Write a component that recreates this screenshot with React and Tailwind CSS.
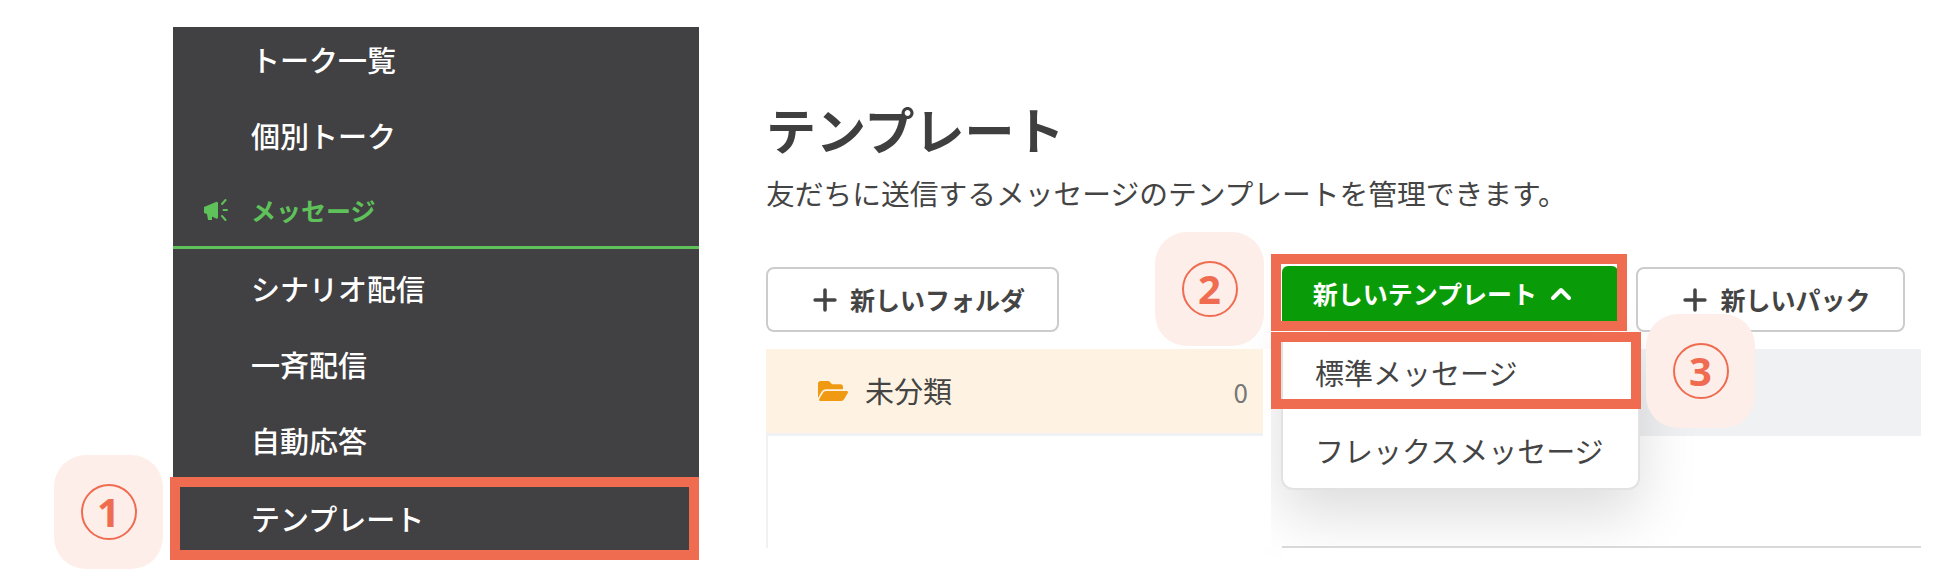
import { ChevronUp, Plus } from "lucide-react";
import { FaFolderOpen } from "react-icons/fa";

const jp = "font-['Noto_Sans_CJK_JP','Noto_Sans',sans-serif]";

function Step({ n, className }) {
  return (
    <div className={`absolute z-20 w-[109px] h-[114px] rounded-[32px] bg-[#fdeeea] flex items-center justify-center ${className}`}>
      <div className="w-[56px] h-[56px] rounded-full border-2 border-[#ef6c50] flex items-center justify-center text-[#ef6c50] text-[40px] font-bold font-['Open_Sans',sans-serif]">
        {n}
      </div>
    </div>
  );
}

function Megaphone() {
  return (
    <svg width="28" height="24" viewBox="0 0 28 24" fill="#5fc15a" className="shrink-0">
      <path d="M1 8 L13 3 Q15 2 15 4.5 L15 18 Q15 20.5 13 19.5 L9 17.5 L9 21 L5 21 L4 15 L1 14 Z" />
      <path d="M19 5 L22.5 1 M20.5 11 L24 11 M19 17 L22.5 21" stroke="#5fc15a" strokeWidth="2" strokeLinecap="round" fill="none" />
    </svg>
  );
}

function NavRow({ label, h }) {
  return (
    <div className={`flex items-center shrink-0 pl-[78px] text-white text-[29px] font-medium ${h}`}>{label}</div>
  );
}

function OutlineButton({ label, w }) {
  return (
    <button className={`relative h-[65px] ${w} pl-[8px] rounded-lg border-2 border-[#cccccc] bg-white flex items-center justify-center gap-2 text-[#444444] text-[25px] font-bold`}>
      <Plus size={34} strokeWidth={2.5} />
      {label}
    </button>
  );
}

export default function App() {
  return (
    <div className={`relative w-[1938px] h-[582px] overflow-hidden bg-white flex pt-[27px] pl-[173px] ${jp}`}>
      <aside className="relative w-[526px] h-[525px] bg-[#414042] flex flex-col shrink-0">
        <NavRow label="トーク一覧" h="h-[66px]" />
        <NavRow label="個別トーク" h="h-[82px] pt-[4px]" />
        <div className="flex items-center shrink-0 h-[74px] border-b-[3px] border-[#5fc15a] pl-[30px] gap-[20px] text-[#5fc15a] text-[25px] font-bold">
          <Megaphone />
          メッセージ
        </div>
        <NavRow label="シナリオ配信" h="h-[79px]" />
        <NavRow label="一斉配信" h="h-[72px] pt-[2px]" />
        <NavRow label="自動応答" h="h-[82px]" />
        <NavRow label="テンプレート" h="h-[70px] pt-[3px]" />
        <div className="absolute left-[-3px] right-0 bottom-[-8px] h-[83px] border-[10px] border-[#ef6c50]" />
        <Step n="1" className="left-[-119px] bottom-[-17px]" />
      </aside>

      <main className="relative ml-[67px] w-[1159px] shrink-0">
        <h1 className="mt-[70px] text-[50px] leading-[62px] font-bold text-[#3f3f3f]">テンプレート</h1>
        <p className="mt-[14px] text-[28.75px] leading-[40px] text-[#444444]">友だちに送信するメッセージのテンプレートを管理できます。</p>

        <div className="relative z-20 mt-[54px] flex items-start">
          <OutlineButton label="新しいフォルダ" w="w-[293px]" />
          <button className="relative ml-[223px] mt-[-1px] h-[56px] w-[336px] pr-[10px] rounded-t-md bg-[#0a9b08] flex items-center justify-center gap-[8px] text-white text-[25px] font-bold">
            新しいテンプレート
            <ChevronUp size={32} strokeWidth={3} />
          </button>
          <div className="ml-[18px]">
            <OutlineButton label="新しいパック" w="w-[269px]" />
          </div>
          <div className="absolute left-[505px] top-[-13px] w-[356px] h-[77px] border-[10px] border-[#ef6c50]" />
          <Step n="2" className="left-[389px] top-[-35px]" />
        </div>

        <div className="mt-[17px] flex h-[87px]">
          <div className="relative z-10 w-[505px] h-[200px] bg-white shrink-0">
            <div className="w-[497px] h-[87px] border-b-[3px] border-[#f0f1f3] bg-[#fef3e2] flex items-center pl-[52px] text-[#444444]">
              <FaFolderOpen size={30} color="#ef9a12" />
              <span className="ml-[17px] text-[29px]">未分類</span>
              <span className="ml-auto mr-[15px] text-[26px] text-[#777777]">0</span>
            </div>
            <div className="h-[112px] w-[2px] bg-[#f0f1f3]" />
          </div>
          <div className="ml-[11px] flex-1 mr-[4px] h-full bg-[#f0f1f3]" />
        </div>

        <div className="absolute left-[515px] top-[305px] w-[359px] h-[158px] bg-white rounded-b-xl border-2 border-t-0 border-[#e2e2e2] shadow-[0_24px_60px_rgba(0,0,0,0.14)] flex flex-col text-[29px] text-[#444444]">
          <div className="h-[82px] flex items-center pl-[32px]">標準メッセージ</div>
          <div className="flex-1 flex items-center pl-[32px]">フレックスメッセージ</div>
        </div>
        <div className="relative z-10 ml-[516px] mr-[4px] mt-[110px] h-[60px] bg-white border-t-2 border-[#d9d9d9]" />
        <div className="absolute z-10 left-[505px] top-[305px] w-[370px] h-[77px] border-[10px] border-[#ef6c50]" />
        <Step n="3" className="left-[880px] top-[287px]" />
      </main>
    </div>
  );
}
